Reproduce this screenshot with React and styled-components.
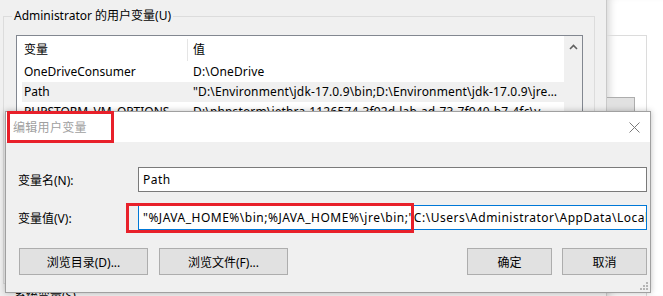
import React from 'react';
import styled, { createGlobalStyle } from 'styled-components';

const GlobalStyle = createGlobalStyle`
  * { box-sizing: border-box; }
  html, body { margin: 0; padding: 0; background: #f0f0f0; }
  body {
    font-family: "Noto Sans", "Noto Sans CJK SC", sans-serif;
    font-size: 12px;
    color: #000;
  }
`;

const rows = [
  { name: 'OneDriveConsumer', value: 'D:\\OneDrive' },
  {
    name: 'Path',
    value: '"D:\\Environment\\jdk-17.0.9\\bin;D:\\Environment\\jdk-17.0.9\\jre\\bin;C:\\Users\\Administrator\\AppData',
    selected: true,
  },
  { name: 'PHPSTORM_VM_OPTIONS', value: 'D:\\phpstorm\\jetbra-1126574-3f92d-lab-ad-73-7f940-b7-4fc\\vmoptions' },
];

const App = () => {
  return (
    <>
      <GlobalStyle />
      <Screen>
        <BackWindow>
          <GroupBox>
            <Legend>Administrator 的用户变量(U)</Legend>
            <ListView>
              <ListBody>
                <HeaderRow>
                  <HeadCell>变量</HeadCell>
                  <HeadCell $divider>值</HeadCell>
                </HeaderRow>
                {rows.map((row) => (
                  <Row key={row.name} $selected={row.selected}>
                    <NameCell>{row.name}</NameCell>
                    <ValueCell>{row.value}</ValueCell>
                  </Row>
                ))}
              </ListBody>
              <ScrollBar>
                <ScrollArrow>
                  <svg width="9" height="6" viewBox="0 0 9 6">
                    <path d="M1 5 L4.5 1.5 L8 5" fill="none" stroke="#606060" strokeWidth="1.6" />
                  </svg>
                </ScrollArrow>
              </ScrollBar>
            </ListView>
          </GroupBox>
          <GroupBox $second>
            <Legend>系统变量(S)</Legend>
          </GroupBox>
        </BackWindow>

        <RightStrip>
          <FarPanel>
            <FarButton />
          </FarPanel>
        </RightStrip>

        <Dialog>
          <TitleBar>
            <TitleText>编辑用户变量</TitleText>
            <CloseButton>
              <svg width="11" height="11" viewBox="0 0 11 11">
                <path d="M0.5 0.5 L10.5 10.5 M10.5 0.5 L0.5 10.5" stroke="#7a7a7a" strokeWidth="1" />
              </svg>
            </CloseButton>
            <Highlight $left={1} $top={-1} $width={107} $height={32} />
          </TitleBar>
          <DialogBody>
            <FieldRow>
              <FieldLabel>变量名(N):</FieldLabel>
              <FieldWrap>
                <Field>Path</Field>
              </FieldWrap>
            </FieldRow>
            <FieldRow>
              <FieldLabel>变量值(V):</FieldLabel>
              <FieldWrap>
                <Field $focused>
                  "%JAVA_HOME%\bin;%JAVA_HOME%\jre\bin;"C:\Users\Administrator\AppData\Local\Microsoft\WindowsApps
                </Field>
                <Highlight $left={-12} $top={-2} $width={288} $height={30} />
              </FieldWrap>
            </FieldRow>
            <ButtonRow>
              <ButtonGroup>
                <Button $width={129}>浏览目录(D)...</Button>
                <Button $width={129}>浏览文件(F)...</Button>
              </ButtonGroup>
              <ButtonGroup $tight>
                <Button $width={85}>确定</Button>
                <Button $width={85}>取消</Button>
              </ButtonGroup>
            </ButtonRow>
          </DialogBody>
          <Grip>
            <svg width="9" height="9" viewBox="0 0 9 9">
              <g fill="#b5b5b5">
                <rect x="7" y="1" width="2" height="2" />
                <rect x="4" y="4" width="2" height="2" />
                <rect x="7" y="4" width="2" height="2" />
                <rect x="1" y="7" width="2" height="2" />
                <rect x="4" y="7" width="2" height="2" />
                <rect x="7" y="7" width="2" height="2" />
              </g>
            </svg>
          </Grip>
        </Dialog>
      </Screen>
    </>
  );
};

export default App;

const Screen = styled.div`
  position: relative;
  display: flex;
  width: 663px;
  height: 296px;
  overflow: hidden;
  background: #f0f0f0;
`;

const BackWindow = styled.div`
  display: flex;
  flex-direction: column;
  width: 607px;
  flex-shrink: 0;
  padding: 8px 0 0 3px;
  background: #f0f0f0;
  border-right: 1px solid #c9c9c9;
`;

const GroupBox = styled.fieldset`
  width: 592px;
  margin: ${({ $second }) => ($second ? '4px 0 0 0' : '0')};
  padding: 0 0 8px 12px;
  border: 1px solid #dcdcdc;
  min-inline-size: 0;
`;

const Legend = styled.legend`
  margin-left: -4px;
  padding: 0 2px;
  font-size: 12px;
  line-height: 16px;
  color: #000;
`;

const ListView = styled.div`
  display: flex;
  width: 567px;
  height: 240px;
  margin-top: 11px;
  border: 1px solid #828790;
  background: #fff;
`;

const ListBody = styled.div`
  flex: 1;
  min-width: 0;
  display: flex;
  flex-direction: column;
`;

const HeaderRow = styled.div`
  display: grid;
  grid-template-columns: 170px 1fr;
  height: 26px;
  padding-top: 2px;
  align-items: center;
`;

const HeadCell = styled.div`
  height: 22px;
  line-height: 22px;
  padding-left: ${({ $divider }) => ($divider ? '5px' : '7px')};
  border-left: ${({ $divider }) => ($divider ? '1px solid #e5e5e5' : 'none')};
`;

const Row = styled.div`
  display: grid;
  grid-template-columns: 165px minmax(0, 1fr);
  height: 20px;
  line-height: 20px;
  margin-left: 5px;
  background: ${({ $selected }) => ($selected ? '#f0f0f0' : 'transparent')};
`;

const NameCell = styled.div`
  padding-left: 2px;
  white-space: nowrap;
  overflow: hidden;
`;

const ValueCell = styled.div`
  padding: 0 4px 0 6px;
  white-space: nowrap;
  overflow: hidden;
  text-overflow: ellipsis;
  letter-spacing: 0.15px;
`;

const ScrollBar = styled.div`
  width: 18px;
  flex-shrink: 0;
  background: #f0f0f0;
`;

const ScrollArrow = styled.div`
  display: flex;
  justify-content: center;
  align-items: center;
  height: 22px;
`;

const RightStrip = styled.div`
  flex: 1;
  padding-top: 35px;
  background: #fff;
  box-shadow: inset 8px 0 8px -6px rgba(0, 0, 0, 0.18);
`;

const FarPanel = styled.div`
  width: 40px;
  height: 100%;
  padding-top: 61px;
  border-top: 1px solid #dcdcdc;
  border-right: 1px solid #dcdcdc;
`;

const FarButton = styled.div`
  width: 28px;
  height: 24px;
  background: #e1e1e1;
  border: 1px solid #adadad;
  border-left: none;
`;

const Dialog = styled.div`
  position: absolute;
  left: 5px;
  top: 111px;
  width: 646px;
  height: 182px;
  display: flex;
  flex-direction: column;
  background: #f0f0f0;
  border: 1px solid #a0a0a0;
  box-shadow: 0 0 6px rgba(0, 0, 0, 0.25);
`;

const TitleBar = styled.div`
  position: relative;
  display: flex;
  align-items: center;
  justify-content: space-between;
  height: 30px;
  flex-shrink: 0;
  padding: 0 8px 0 7px;
  background: #fff;
`;

const TitleText = styled.div`
  font-size: 12px;
  color: #a0a0a0;
  letter-spacing: 0.3px;
`;

const CloseButton = styled.div`
  display: flex;
  align-items: center;
  justify-content: center;
  width: 16px;
  height: 16px;
`;

const Highlight = styled.div`
  position: absolute;
  left: ${({ $left }) => $left}px;
  top: ${({ $top }) => $top}px;
  width: ${({ $width }) => $width}px;
  height: ${({ $height }) => $height}px;
  border: 3px solid #e8202a;
  pointer-events: none;
`;

const DialogBody = styled.div`
  display: flex;
  flex-direction: column;
  gap: 13px;
  padding: 25px 3px 0 12px;
`;

const FieldRow = styled.div`
  display: grid;
  grid-template-columns: 120px minmax(0, 1fr);
  align-items: center;
`;

const FieldLabel = styled.div`
  font-size: 12px;
`;

const FieldWrap = styled.div`
  position: relative;
  min-width: 0;
`;

const Field = styled.div`
  height: 25px;
  line-height: 23px;
  padding-left: 4px;
  background: #fff;
  border: 1px solid ${({ $focused }) => ($focused ? '#0078d7' : '#7a7a7a')};
  white-space: nowrap;
  overflow: hidden;
  font-size: 12px;
  letter-spacing: 0.5px;
`;

const ButtonRow = styled.div`
  display: flex;
  justify-content: space-between;
  margin-top: 5px;
  padding-left: 1px;
`;

const ButtonGroup = styled.div`
  display: flex;
  gap: ${({ $tight }) => ($tight ? '10px' : '11px')};
`;

const Button = styled.div`
  display: flex;
  align-items: center;
  justify-content: center;
  width: ${({ $width }) => $width}px;
  height: 27px;
  background: #e1e1e1;
  border: 1px solid #adadad;
  font-size: 12px;
`;

const Grip = styled.div`
  position: absolute;
  right: 2px;
  bottom: 2px;
  line-height: 0;
`;
